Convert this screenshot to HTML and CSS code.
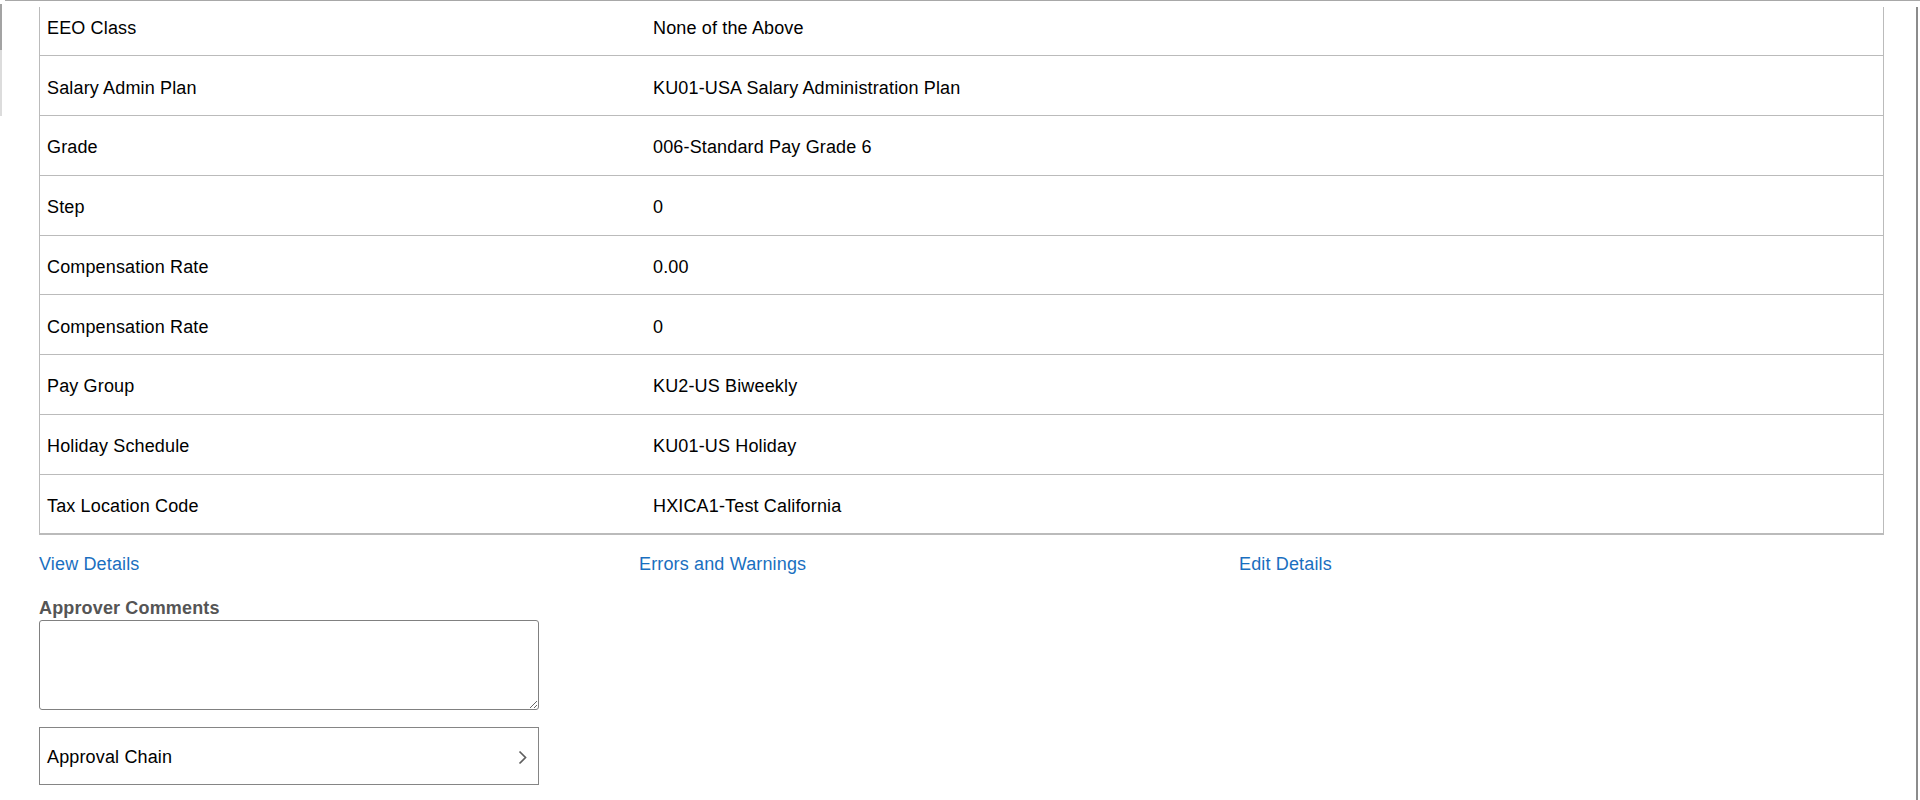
FILE: index.html
```html
<!DOCTYPE html>
<html lang="en">
<head>
  <meta charset="UTF-8" />
  <meta name="viewport" content="width=device-width, initial-scale=1.0"/>
  <title>Approval Details</title>
  <link rel="stylesheet" href="styles.css">
</head>
<body>

<div class="page">
  <div class="edge"></div>

  <div class="main">
    <div class="scroll">

      <!-- Job data grid -->
      <div class="grid">
        <div class="row"><div class="lbl">EEO Class</div><div class="val">None of the Above</div></div>
        <div class="row"><div class="lbl">Salary Admin Plan</div><div class="val">KU01-USA Salary Administration Plan</div></div>
        <div class="row"><div class="lbl">Grade</div><div class="val">006-Standard Pay Grade 6</div></div>
        <div class="row"><div class="lbl">Step</div><div class="val">0</div></div>
        <div class="row"><div class="lbl">Compensation Rate</div><div class="val">0.00</div></div>
        <div class="row"><div class="lbl">Compensation Rate</div><div class="val">0</div></div>
        <div class="row"><div class="lbl">Pay Group</div><div class="val">KU2-US Biweekly</div></div>
        <div class="row"><div class="lbl">Holiday Schedule</div><div class="val">KU01-US Holiday</div></div>
        <div class="row"><div class="lbl">Tax Location Code</div><div class="val">HXICA1-Test California</div></div>
      </div>

      <!-- Links -->
      <div class="links">
        <a href="#">View Details</a>
        <a href="#">Errors and Warnings</a>
        <a href="#">Edit Details</a>
      </div>

      <!-- Comments -->
      <label class="cmt-label" for="comments">Approver Comments</label>
      <textarea id="comments" class="cmt"></textarea>

      <!-- Approval chain -->
      <div class="chain">
        <span>Approval Chain</span>
        <svg width="9" height="15" viewBox="0 0 9 15">
          <polyline points="1.5,1.5 7.5,7.5 1.5,13.5" fill="none" stroke="#5f5f5f" stroke-width="1.7"/>
        </svg>
      </div>

    </div>
  </div>
</div>

</body>
</html>
```

FILE: styles.css
```css
html, body {
  margin: 0;
  height: 800px;
  overflow: hidden;
  background: #fff;
}
body {
  font-family: "Liberation Sans", Arial, sans-serif;
  font-size: 18px;
  letter-spacing: 0.15px;
  color: #000;
}
.page {
  display: flex;
  height: 800px;
}
.edge {
  width: 2px;
  height: 112px;
  margin-top: 4px;
  background: linear-gradient(#a3a3a3 0, #a3a3a3 46px, #dcdcdc 46px);
  flex-shrink: 0;
}
.main {
  flex: 1;
  margin-left: 3px;
  border-top: 1px solid #a8a8a8;
}
.scroll {
  margin-top: 6px;
  margin-right: 2px;
  height: 793px;
  overflow: hidden;
  border-right: 2px solid #8c8c8c;
  padding: 0 32px 0 34px;
}
.grid {
  margin-top: -10.5px;
  border: 1px solid #bbb;
  border-top: none;
}
.row {
  display: grid;
  grid-template-columns: 606px 1fr;
  align-items: center;
  height: 59.75px;
  box-sizing: border-box;
  border-bottom: 1px solid #bbb;
}
.lbl, .val {
  padding: 5px 7px 0;
  line-height: 21px;
}
.links {
  display: grid;
  grid-template-columns: 600px 600px 600px;
  margin-top: 19px;
  line-height: 21px;
}
.links a {
  color: #1a6fc0;
  text-decoration: none;
  justify-self: start;
}
.cmt-label {
  display: block;
  margin-top: 23px;
  margin-bottom: 1px;
  font-weight: bold;
  color: #555;
  line-height: 21px;
}
.cmt {
  display: block;
  width: 500px;
  height: 90px;
  box-sizing: border-box;
  border: 1px solid #808080;
  border-radius: 3px;
  font-family: inherit;
  font-size: 16px;
  margin: 0;
}
.chain {
  display: flex;
  align-items: center;
  justify-content: space-between;
  width: 500px;
  height: 58px;
  box-sizing: border-box;
  margin-top: 17px;
  padding: 2px 11px 0 7px;
  border: 1px solid #858585;
}
```
